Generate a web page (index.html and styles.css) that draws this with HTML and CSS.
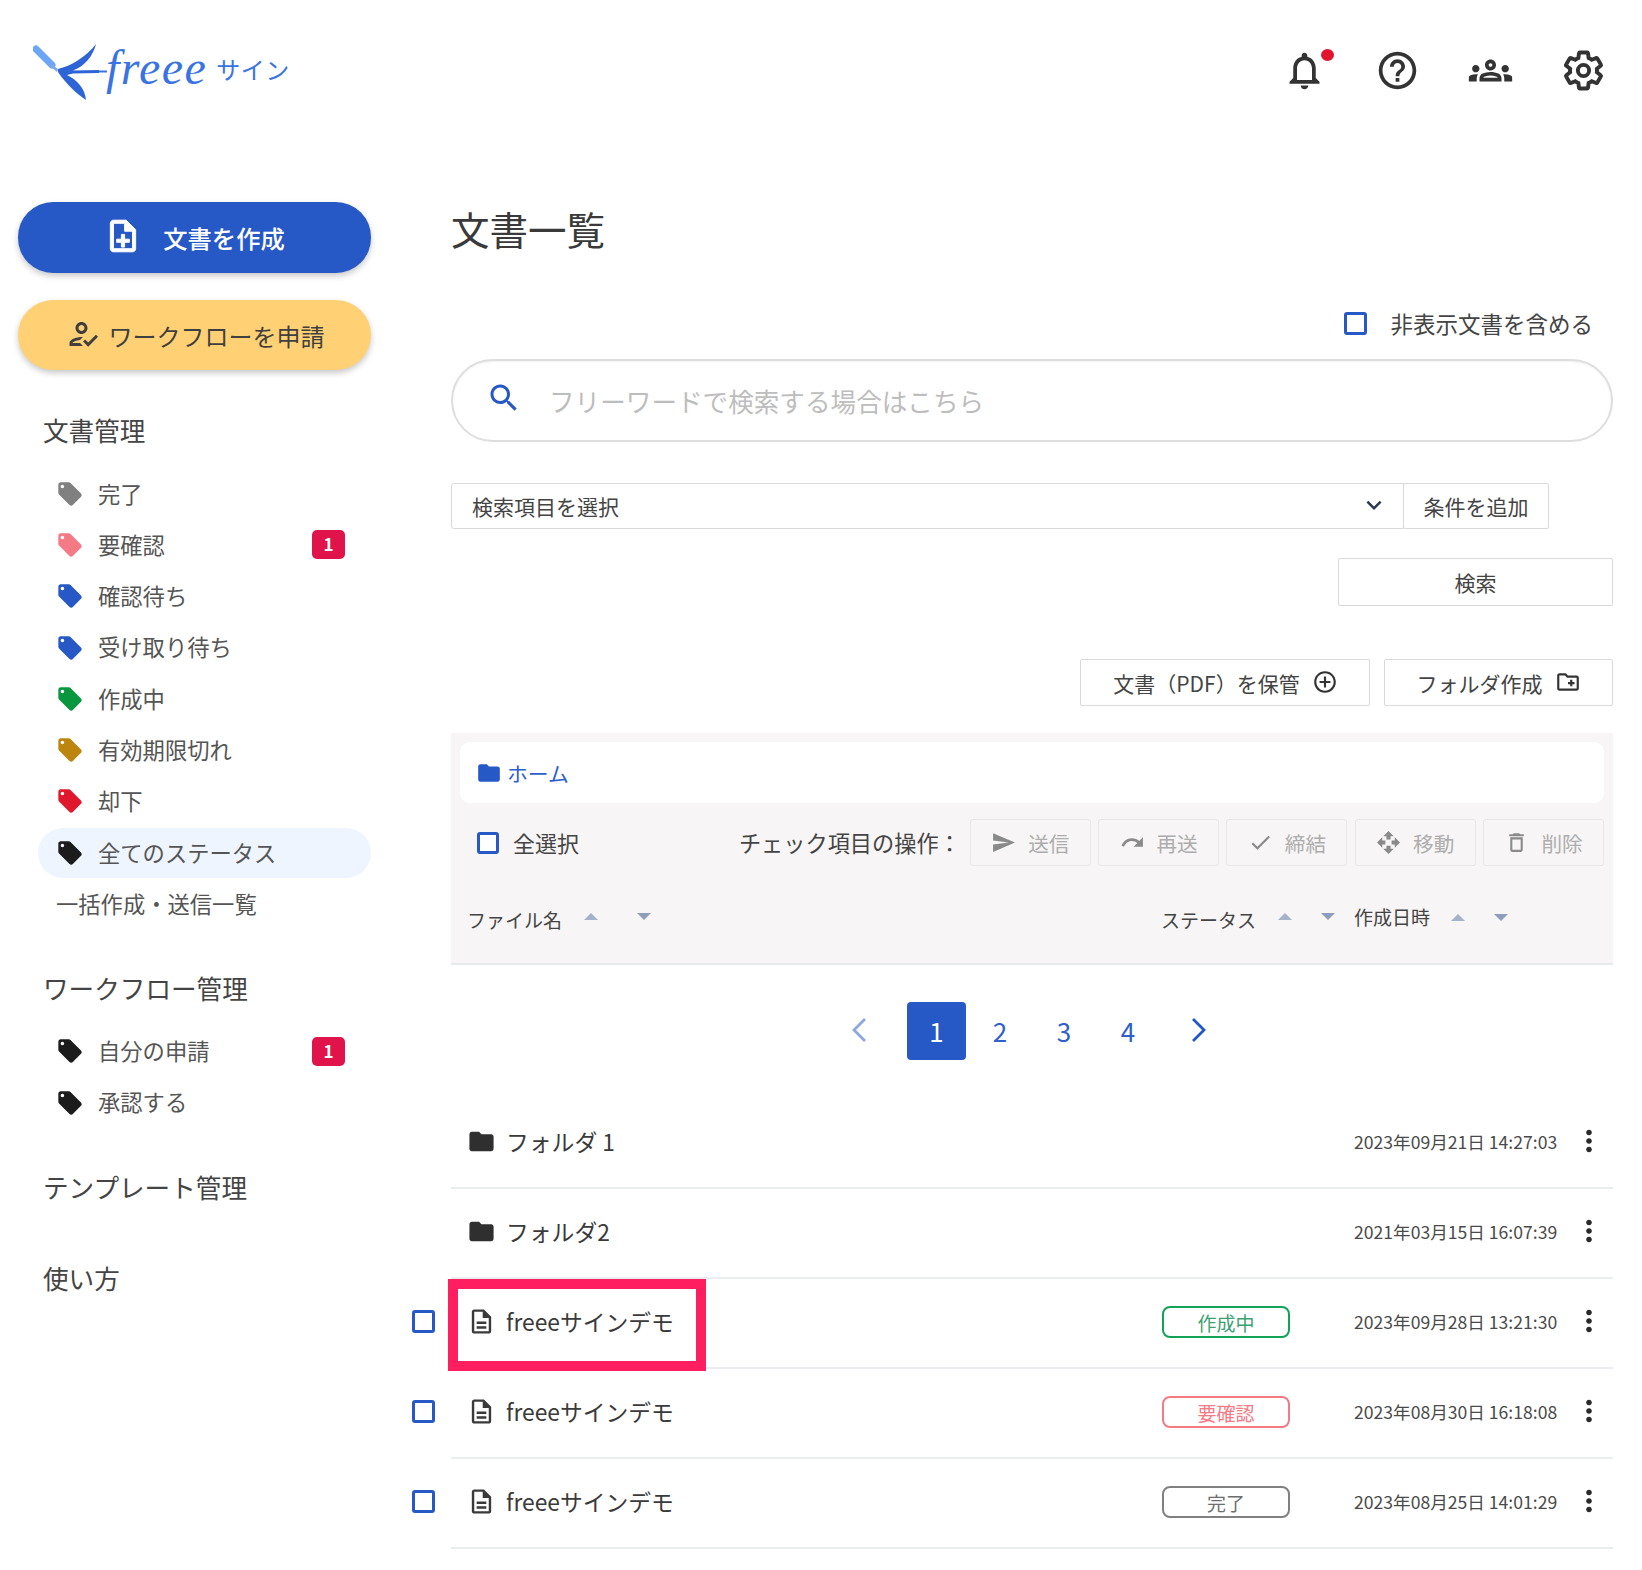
FILE: index.html
```html
<!DOCTYPE html>
<html lang="ja">
<head>
<meta charset="utf-8">
<title>freeeサイン 文書一覧</title>
<link rel="stylesheet" href="styles.css">
</head>
<body>
<svg class="sprite" aria-hidden="true">
  <symbol id="i-bell" viewBox="0 0 24 24"><path d="M12 22c1.100 0 2-.9 2-2h-4c0 1.100.9 2 2 2zm6-6v-5c0-3.070-1.630-5.640-4.500-6.320V4c0-.83-.67-1.500-1.500-1.500s-1.500.67-1.500 1.500v.68C7.640 5.360 6 7.920 6 11v5l-2 2v1h16v-1l-2-2zm-2 1H8v-6c0-2.480 1.510-4.500 4-4.500s4 2.020 4 4.500v6z"/></symbol>
  <symbol id="i-help" viewBox="0 0 24 24"><path d="M11 18h2v-2h-2v2zm1-16C6.480 2 2 6.480 2 12s4.480 10 10 10 10-4.480 10-10S17.520 2 12 2zm0 18c-4.410 0-8-3.590-8-8s3.590-8 8-8 8 3.590 8 8-3.590 8-8 8zm0-14c-2.210 0-4 1.790-4 4h2c0-1.100.9-2 2-2s2 .9 2 2c0 2-3 1.750-3 5h2c0-2.250 3-2.500 3-5 0-2.210-1.790-4-4-4z"/></symbol>
  <symbol id="i-groups" viewBox="0 0 24 24"><path d="M4,13c1.100,0,2-0.900,2-2c0-1.100-0.900-2-2-2s-2,0.900-2,2C2,12.100,2.900,13,4,13z M5.130,14.100C4.760,14.040,4.390,14,4,14 c-0.990,0-1.930,0.210-2.780,0.580C0.480,14.900,0,15.620,0,16.430V18l4.500,0v-1.610C4.500,15.560,4.730,14.780,5.130,14.100z M20,13c1.100,0,2-0.900,2-2 c0-1.100-0.900-2-2-2s-2,0.900-2,2C18,12.100,18.900,13,20,13z M24,16.430c0-0.810-0.480-1.530-1.220-1.850C21.930,14.210,20.990,14,20,14 c-0.390,0-0.760,0.040-1.130,0.100c0.400,0.680,0.630,1.460,0.630,2.290V18l4.500,0V16.430z M16.240,13.650c-1.170-0.520-2.610-0.900-4.240-0.900 c-1.630,0-3.070,0.390-4.240,0.900C6.680,14.130,6,15.210,6,16.390V18h12v-1.610C18,15.210,17.320,14.130,16.240,13.650z M8.070,16 c0.090-0.230,0.130-0.390,0.910-0.690c0.970-0.380,1.990-0.560,3.020-0.560s2.050,0.180,3.020,0.560c0.770,0.300,0.810,0.460,0.910,0.690H8.070z M12,8 c0.550,0,1,0.450,1,1s-0.450,1-1,1s-1-0.450-1-1S11.450,8,12,8 M12,6c-1.660,0-3,1.340-3,3c0,1.660,1.340,3,3,3s3-1.340,3-3 C15,7.340,13.660,6,12,6L12,6z"/></symbol>
  <symbol id="i-gear" viewBox="0 0 24 24"><path class="gear-line" d="M19.140 12.940c.04-.3.060-.61.060-.94 0-.32-.02-.64-.07-.94l2.030-1.580c.18-.14.23-.41.120-.61l-1.920-3.320c-.12-.22-.37-.29-.59-.22l-2.390.96c-.5-.38-1.030-.7-1.620-.94l-.36-2.540c-.04-.24-.24-.41-.48-.41h-3.840c-.24 0-.43.170-.47.410l-.36 2.540c-.59.240-1.130.570-1.620.940l-2.390-.96c-.22-.08-.47 0-.59.220L2.740 8.870c-.12.210-.08.470.120.610l2.030 1.580c-.05.300-.09.630-.09.940s.02.640.07.940l-2.030 1.580c-.18.140-.23.410-.12.610l1.920 3.320c.12.220.37.290.59.220l2.390-.96c.5.380 1.030.7 1.620.94l.36 2.540c.05.240.24.410.48.410h3.840c.24 0 .44-.17.47-.41l.36-2.540c.59-.24 1.130-.56 1.620-.94l2.390.96c.22.080.47 0 .59-.22l1.920-3.320c.12-.22.07-.47-.12-.61l-2.010-1.580z"/><circle class="gear-line" cx="12" cy="12" r="3"/></symbol>
  <symbol id="i-search" viewBox="0 0 24 24"><path d="M15.500 14h-.79l-.28-.27C15.410 12.590 16 11.110 16 9.500 16 5.910 13.090 3 9.500 3S3 5.910 3 9.500 5.910 16 9.500 16c1.610 0 3.090-.59 4.230-1.570l.27.28v.79l5 4.990L20.490 19l-4.990-5zm-6 0C7.010 14 5 11.990 5 9.500S7.010 5 9.500 5 14 7.010 14 9.500 11.990 14 9.500 14z"/></symbol>
  <symbol id="i-tag" viewBox="0 0 24 24"><path d="M21.410 11.580l-9-9C12.050 2.220 11.550 2 11 2H4c-1.100 0-2 .9-2 2v7c0 .55.22 1.050.59 1.420l9 9c.36.36.86.58 1.410.58.55 0 1.050-.22 1.410-.59l7-7c.37-.36.59-.86.59-1.410 0-.55-.23-1.060-.59-1.420zM5.500 7C4.670 7 4 6.330 4 5.500S4.670 4 5.500 4 7 4.670 7 5.500 6.330 7 5.500 7z"/></symbol>
  <symbol id="i-note-add" viewBox="0 0 24 24"><path d="M13 11h-2v3H8v2h3v3h2v-3h3v-2h-3zm1-9H6c-1.100 0-2 .9-2 2v16c0 1.100.89 2 1.990 2H18c1.100 0 2-.9 2-2V8l-6-6zm4 18H6V4h7v5h5v11z"/></symbol>
  <symbol id="i-reg" viewBox="0 0 24 24"><path d="M11 12c2.210 0 4-1.790 4-4s-1.790-4-4-4-4 1.790-4 4 1.790 4 4 4zm0-6c1.100 0 2 .9 2 2s-.9 2-2 2-2-.9-2-2 .9-2 2-2zM5 18c.2-.63 2.570-1.680 4.960-1.940l2.040-2c-.39-.04-.68-.06-1-.06-2.670 0-8 1.340-8 4v2h9l-2-2H5zm15.600-5.500l-5.130 5.170-2.070-2.080L12 17l3.470 3.500L22 13.910z"/></symbol>
  <symbol id="i-folder" viewBox="0 0 24 24"><path d="M10 4H4c-1.100 0-1.990.9-1.990 2L2 18c0 1.100.9 2 2 2h16c1.100 0 2-.9 2-2V8c0-1.100-.9-2-2-2h-8l-2-2z"/></symbol>
  <symbol id="i-doc" viewBox="0 0 24 24"><path d="M8 16h8v2H8zm0-4h8v2H8zm6-10H6c-1.100 0-2 .9-2 2v16c0 1.100.89 2 1.990 2H18c1.100 0 2-.9 2-2V8l-6-6zm4 18H6V4h7v5h5v11z"/></symbol>
  <symbol id="i-add-circle" viewBox="0 0 24 24"><path d="M13 7h-2v4H7v2h4v4h2v-4h4v-2h-4V7zm-1-5C6.480 2 2 6.480 2 12s4.480 10 10 10 10-4.480 10-10S17.520 2 12 2zm0 18c-4.410 0-8-3.590-8-8s3.590-8 8-8 8 3.590 8 8-3.590 8-8 8z"/></symbol>
  <symbol id="i-new-folder" viewBox="0 0 24 24"><path d="M20 6h-8l-2-2H4c-1.110 0-1.990.89-1.990 2L2 18c0 1.110.89 2 2 2h16c1.110 0 2-.89 2-2V8c0-1.110-.89-2-2-2zm0 12H4V6h5.170l2 2H20v10zm-8-4h2v2h2v-2h2v-2h-2v-2h-2v2h-2z"/></symbol>
  <symbol id="i-send" viewBox="0 0 24 24"><path d="M2.010 21L23 12 2.010 3 2 10l15 2-15 2z"/></symbol>
  <symbol id="i-redo" viewBox="0 0 24 24"><path d="M18.400 10.600C16.550 8.990 14.150 8 11.500 8c-4.650 0-8.580 3.030-9.960 7.220L3.900 16c1.050-3.190 4.050-5.500 7.600-5.500 1.950 0 3.730.72 5.120 1.880L13 16h9V7l-3.600 3.600z"/></symbol>
  <symbol id="i-check" viewBox="0 0 24 24"><path d="M9 16.170L4.830 12l-1.420 1.410L9 19 21 7l-1.410-1.410z"/></symbol>
  <symbol id="i-move" viewBox="0 0 24 24"><path d="M10 9h4V6h3l-5-5-5 5h3v3zm-1 1H6V7l-5 5 5 5v-3h3v-4zm14 2l-5-5v3h-3v4h3v3l5-5zm-9 3h-4v3H7l5 5 5-5h-3v-3z"/></symbol>
  <symbol id="i-delete" viewBox="0 0 24 24"><path d="M6 19c0 1.100.9 2 2 2h8c1.100 0 2-.9 2-2V7H6v12zM8 9h8v10H8V9zm7.500-5l-1-1h-5l-1 1H5v2h14V4z"/></symbol>
  <symbol id="i-more" viewBox="0 0 24 24"><path d="M12 8c1.100 0 2-.9 2-2s-.9-2-2-2-2 .9-2 2 .9 2 2 2zm0 2c-1.100 0-2 .9-2 2s.9 2 2 2 2-.9 2-2-.9-2-2-2zm0 6c-1.100 0-2 .9-2 2s.9 2 2 2 2-.9 2-2-.9-2-2-2z"/></symbol>
  <symbol id="i-expand" viewBox="0 0 24 24"><path d="M16.590 8.590L12 13.170 7.410 8.590 6 10l6 6 6-6z"/></symbol>
</svg>

<header class="topbar">
  <a class="logo">
    <svg class="logo-bird" viewBox="0 0 78 56" aria-hidden="true">
      <path class="bird-pen" d="M3 5L19 21"/>
      <path class="bird-nib" d="M18 20l7 5-1 3-7-6z"/>
      <path class="bird-wing" d="M25 25C38 22 53 13 63 0C60 12 52 22 40 26.500L66 26V29L40 29.500L34 31C44 36 52 44 53 56C44 50 33 40 25 28z"/>
      <path class="bird-tail" d="M66 27.500H74"/>
    </svg>
    <span class="logo-word">freee</span>
    <span class="logo-sub">サイン</span>
  </a>
  <nav class="top-icons">
    <span class="top-icon bell"><svg class="ic-top"><use href="#i-bell"/></svg><i class="bell-dot"></i></span>
    <span class="top-icon"><svg class="ic-top"><use href="#i-help"/></svg></span>
    <span class="top-icon"><svg class="ic-top groups"><use href="#i-groups"/></svg></span>
    <span class="top-icon"><svg class="ic-top"><use href="#i-gear"/></svg></span>
  </nav>
</header>

<div class="layout">
  <aside class="sidebar">
    <button class="cta cta-blue"><svg class="cta-icon-doc"><use href="#i-note-add"/></svg><span>文書を作成</span></button>
    <button class="cta cta-yellow"><svg class="cta-icon-reg"><use href="#i-reg"/></svg><span>ワークフローを申請</span></button>

    <section class="nav-group first">
      <h2 class="nav-title">文書管理</h2>
      <ul class="nav-list">
        <li class="nav-item"><svg class="tag t-gray"><use href="#i-tag"/></svg>完了</li>
        <li class="nav-item"><svg class="tag t-pink"><use href="#i-tag"/></svg>要確認<span class="count">1</span></li>
        <li class="nav-item"><svg class="tag t-blue"><use href="#i-tag"/></svg>確認待ち</li>
        <li class="nav-item"><svg class="tag t-blue"><use href="#i-tag"/></svg>受け取り待ち</li>
        <li class="nav-item"><svg class="tag t-green"><use href="#i-tag"/></svg>作成中</li>
        <li class="nav-item"><svg class="tag t-gold"><use href="#i-tag"/></svg>有効期限切れ</li>
        <li class="nav-item"><svg class="tag t-red"><use href="#i-tag"/></svg>却下</li>
        <li class="nav-item active"><svg class="tag t-black"><use href="#i-tag"/></svg>全てのステータス</li>
        <li class="nav-item plain">一括作成・送信一覧</li>
      </ul>
    </section>
    <section class="nav-group">
      <h2 class="nav-title tight">ワークフロー管理</h2>
      <ul class="nav-list">
        <li class="nav-item"><svg class="tag t-black"><use href="#i-tag"/></svg>自分の申請<span class="count">1</span></li>
        <li class="nav-item"><svg class="tag t-black"><use href="#i-tag"/></svg>承認する</li>
      </ul>
    </section>
    <section class="nav-group">
      <h2 class="nav-title loose">テンプレート管理</h2>
    </section>
    <section class="nav-group flush">
      <h2 class="nav-title">使い方</h2>
    </section>
  </aside>

  <main class="main">
    <h1 class="page-title">文書一覧</h1>

    <label class="hidden-toggle"><i class="check"></i><span>非表示文書を含める</span></label>

    <div class="search-box">
      <svg class="search-icon"><use href="#i-search"/></svg>
      <span class="search-ph">フリーワードで検索する場合はこちら</span>
    </div>

    <div class="filter-row">
      <div class="select"><span>検索項目を選択</span><svg class="select-arrow"><use href="#i-expand"/></svg></div>
      <button class="outline add-cond">条件を追加</button>
    </div>

    <div class="search-row"><button class="outline search-btn">検索</button></div>

    <div class="create-row">
      <button class="outline create-pdf">文書（PDF）を保管<svg class="btn-icon"><use href="#i-add-circle"/></svg></button>
      <button class="outline create-folder">フォルダ作成<svg class="btn-icon"><use href="#i-new-folder"/></svg></button>
    </div>

    <section class="table-head">
      <div class="crumb"><svg class="crumb-icon"><use href="#i-folder"/></svg><span>ホーム</span></div>
      <div class="toolbar">
        <i class="check"></i><span class="select-all">全選択</span>
        <span class="bulk-label">チェック項目の操作：</span>
        <button class="bulk"><svg><use href="#i-send"/></svg>送信</button>
        <button class="bulk"><svg><use href="#i-redo"/></svg>再送</button>
        <button class="bulk"><svg><use href="#i-check"/></svg>締結</button>
        <button class="bulk"><svg><use href="#i-move"/></svg>移動</button>
        <button class="bulk"><svg><use href="#i-delete"/></svg>削除</button>
      </div>
      <div class="columns">
        <div class="col col-name">ファイル名<i class="sort up"></i><i class="sort down"></i></div>
        <div class="col col-status">ステータス<i class="sort up"></i><i class="sort down"></i></div>
        <div class="col col-date">作成日時<i class="sort up"></i><i class="sort down"></i></div>
      </div>
    </section>

    <nav class="pager">
      <svg class="chev prev" viewBox="0 0 18 28"><path d="M15 3L4 14l11 11"/></svg>
      <span class="page current">1</span>
      <span class="page">2</span>
      <span class="page">3</span>
      <span class="page">4</span>
      <svg class="chev next" viewBox="0 0 18 28"><path d="M3 3l11 11L3 25"/></svg>
    </nav>

    <div class="rows">
      <div class="row">
        <span class="gutter"></span>
        <div class="row-body">
          <div class="name"><svg class="folder-icon"><use href="#i-folder"/></svg>フォルダ 1</div><div></div>
          <div class="date">2023年09月21日 14:27:03</div><svg class="more"><use href="#i-more"/></svg>
        </div>
      </div>
      <div class="row">
        <span class="gutter"></span>
        <div class="row-body">
          <div class="name"><svg class="folder-icon"><use href="#i-folder"/></svg>フォルダ2</div><div></div>
          <div class="date">2021年03月15日 16:07:39</div><svg class="more"><use href="#i-more"/></svg>
        </div>
      </div>
      <div class="row">
        <span class="gutter"><i class="check"></i></span>
        <div class="row-body">
          <div class="name"><svg class="doc-icon"><use href="#i-doc"/></svg>freeeサインデモ</div>
          <div><span class="status s-green">作成中</span></div>
          <div class="date">2023年09月28日 13:21:30</div><svg class="more"><use href="#i-more"/></svg>
        </div>
        <i class="callout"></i>
      </div>
      <div class="row">
        <span class="gutter"><i class="check"></i></span>
        <div class="row-body">
          <div class="name"><svg class="doc-icon"><use href="#i-doc"/></svg>freeeサインデモ</div>
          <div><span class="status s-pink">要確認</span></div>
          <div class="date">2023年08月30日 16:18:08</div><svg class="more"><use href="#i-more"/></svg>
        </div>
      </div>
      <div class="row">
        <span class="gutter"><i class="check"></i></span>
        <div class="row-body">
          <div class="name"><svg class="doc-icon"><use href="#i-doc"/></svg>freeeサインデモ</div>
          <div><span class="status s-gray">完了</span></div>
          <div class="date">2023年08月25日 14:01:29</div><svg class="more"><use href="#i-more"/></svg>
        </div>
      </div>
    </div>
  </main>
</div>
</body>
</html>
```

FILE: styles.css
```css
* { box-sizing: border-box; }
html, body { margin: 0; padding: 0; }
body {
  width: 1642px;
  height: 1570px;
  overflow: hidden;
  background: #fff;
  color: #3a3a3a;
  font-family: "Noto Sans CJK JP", "Noto Sans", sans-serif;
}
.sprite { display: none; }
svg { fill: currentColor; flex: none; }
button { font: inherit; color: inherit; background: none; cursor: default; }
ul { list-style: none; margin: 0; padding: 0; }
h1, h2 { margin: 0; font-weight: 400; }
i { display: block; }

/* header */
.topbar {
  height: 202px;
  padding: 44px 0 0 33px;
  display: flex;
  justify-content: space-between;
  align-items: flex-start;
}
.logo { display: flex; align-items: flex-start; color: #3a74e2; }
.logo-bird { width: 78px; height: 56px; }
.bird-pen { stroke: #6ea6f6; stroke-width: 7; stroke-linecap: round; fill: none; }
.bird-nib { fill: #7fa8e8; }
.bird-wing { fill: #2d64d6; }
.bird-tail { stroke: #3a74e2; stroke-width: 2; fill: none; }
.logo-word {
  font-family: "Liberation Serif", serif;
  font-style: italic;
  font-size: 48px;
  line-height: 48px;
  margin: 0 0 0 -5px;
  letter-spacing: 1.400px;
}
.logo-sub { font-size: 24px; line-height: 36px; margin: 7px 0 0 9px; letter-spacing: .5px; }
.top-icons {
  display: flex;
  padding: 4px 36px 0 0;
  gap: 48px;
  align-items: center;
}
.top-icon { position: relative; display: block; width: 45px; height: 45px; color: #333; }
.ic-top { width: 45px; height: 45px; display: block; }
.groups { transform: scale(.98); }
.gear-line { fill: none; stroke: currentColor; stroke-width: 2.100; }
.bell-dot {
  position: absolute;
  top: 1px;
  right: -7px;
  width: 13px;
  height: 12px;
  border-radius: 50%;
  background: #e0152d;
}

/* layout */
.layout { display: flex; align-items: flex-start; }
.sidebar { width: 451px; padding-left: 18px; flex: none; }
.main { width: 1162px; flex: none; }

/* sidebar */
.cta {
  width: 353px;
  height: 70px;
  display: flex;
  align-items: center;
  justify-content: center;
  border: 0;
  border-radius: 35px;
  font-size: 24px;
  box-shadow: 0 3px 6px rgba(0, 0, 0, .22);
}
.cta-blue { background: #2759c6; color: #fff; font-weight: 500; height: 71px; padding-left: 6px; font-size: 24.300px; }
.cta-blue svg { width: 38px; height: 38px; margin-right: 21px; margin-top: -4px; stroke: currentColor; stroke-width: .6; }
.cta-yellow { background: #ffd174; color: #3f3f3f; margin-top: 27px; padding-top: 2px; }
.cta-yellow svg { width: 36px; height: 36px; margin-right: 8px; margin-top: -4px; }

.nav-group { margin-top: 39px; }
.nav-group.first { margin-top: 40px; }
.nav-group.flush { margin-top: 51px; }
.nav-title { font-size: 25.600px; line-height: 40px; color: #444; padding-left: 25px; margin-bottom: 18px; }
.nav-title.tight { margin-bottom: 18px; margin-top: -1px; }
.nav-title.loose { margin-bottom: 0; }
.nav-item {
  display: flex;
  align-items: center;
  height: 51.300px;
  padding: 0 0 2px 18px;
  margin: 0 80px 0 20px;
  font-size: 22.300px;
  line-height: 1;
  color: #555;
  position: relative;
  z-index: 0;
}
.nav-item.active::before {
  content: "";
  position: absolute;
  z-index: -1;
  left: 0;
  right: 0;
  top: .600px;
  height: 50px;
  border-radius: 25px;
  background: #eef5ff;
}
.tag { width: 28px; height: 28px; margin: 2px 14px 0 0; }
.t-gray { color: #808080; }
.t-pink { color: #f47a86; }
.t-blue { color: #2759c6; }
.t-green { color: #08963f; }
.t-gold { color: #bc860e; }
.t-red { color: #e0182d; }
.t-black { color: #1c1c1c; }
.count {
  position: absolute;
  left: 274px;
  top: 11px;
  width: 33px;
  height: 29px;
  border-radius: 5px;
  background: #e0134a;
  color: #fff;
  font-size: 17px;
  font-weight: 700;
  line-height: 28px;
  text-align: center;
}

/* main head */
.page-title { font-size: 38.500px; line-height: 52px; color: #3a3a3a; }
.check {
  width: 23px;
  height: 23px;
  border: 3px solid #2759c6;
  border-radius: 3px;
  background: #fff;
  flex: none;
}
.hidden-toggle {
  display: flex;
  align-items: center;
  justify-content: flex-end;
  height: 24px;
  margin-top: 57px;
  padding-right: 20px;
  font-size: 22.500px;
  color: #444;
}
.hidden-toggle .check { margin-right: 23px; }
.search-box {
  display: flex;
  align-items: center;
  height: 83px;
  margin-top: 24px;
  padding: 0 0 0 33px;
  border: 2px solid #dedede;
  border-radius: 42px;
  box-shadow: inset 0 1px 2px rgba(0, 0, 0, .06);
}
.search-icon { width: 36px; height: 36px; color: #2759c6; margin-top: -6px; }
.search-ph { margin-left: 27px; font-size: 25.600px; color: #bdbdbd; }

.filter-row { display: flex; margin-top: 41px; height: 46px; }
.select {
  width: 953px;
  display: flex;
  align-items: center;
  justify-content: space-between;
  border: 1.500px solid #d9d9d9;
  border-radius: 3px 0 0 3px;
  padding: 0 14px 0 20px;
  font-size: 21px;
  color: #444;
}
.select-arrow { width: 30px; height: 30px; color: #2a3a55; margin-top: -3px; }
.outline {
  border: 1.500px solid #d9d9d9;
  border-radius: 2px;
  background: #fff;
  font-size: 21px;
  color: #444;
  display: flex;
  align-items: center;
  justify-content: center;
}
.add-cond { width: 146px; margin-left: -1px; }
.search-row { display: flex; justify-content: flex-end; margin-top: 29px; }
.search-btn { width: 275px; height: 48px; }
.create-row { display: flex; justify-content: flex-end; gap: 14px; margin-top: 53px; }
.create-pdf { width: 290px; height: 47px; padding-right: 5px; }
.create-folder { width: 229px; height: 47px; }
.btn-icon { width: 26px; height: 26px; margin-left: 12px; margin-top: -2px; color: #333; }

/* table head */
.table-head {
  margin-top: 27px;
  height: 232px;
  padding: 9px 9px 0;
  background: #f7f5f5;
  border-bottom: 2px solid #e9eaee;
}
.crumb {
  height: 61px;
  border-radius: 10px;
  background: #fff;
  display: flex;
  align-items: center;
  padding-left: 16px;
  color: #2c5fcb;
  font-size: 20.800px;
}
.crumb-icon { width: 26px; height: 26px; margin-right: 5px; color: #2759c6; }
.toolbar { display: flex; align-items: center; margin-top: 16px; height: 47px; padding-left: 17px; }
.toolbar .check { width: 22px; height: 22px; }
.select-all { margin-left: 14px; font-size: 22px; color: #444; line-height: 1; margin-top: -2px; }
.bulk-label { margin-left: auto; margin-right: 9px; font-size: 22.200px; color: #444; line-height: 1; margin-top: -1px; }
.bulk {
  width: 121px;
  height: 47px;
  margin-left: 7.300px;
  display: flex;
  align-items: center;
  justify-content: center;
  border: 1.500px solid #e8e8e8;
  border-radius: 3px;
  background: #f7f5f5;
  font-size: 20.600px;
  color: #adadad;
}
.bulk:first-of-type { margin-left: 0; }
.bulk svg { width: 25px; height: 25px; margin-right: 12px; color: #8a8a8a; }
.columns { display: grid; grid-template-columns: 702px 192px 1fr; margin: 34px 0 0 -9px; padding-left: 9px; height: 38px; }
.col { display: flex; align-items: center; font-size: 19px; color: #444; }
.col-name { margin-left: -2px; padding-left: 9px; }
.col-status { margin-left: -1px; }
.col-date { margin-top: -5px; }
.sort { width: 0; height: 0; border-left: 7px solid transparent; border-right: 7px solid transparent; margin-top: -6px; }
.sort.up { border-bottom: 7px solid #a5b3ca; margin-left: 22px; }
.sort.down { border-top: 7px solid #8e9dbb; margin-left: 39px; }
.col-status .sort.down { margin-left: 29px; }
.col-status .sort.up { margin-left: 22px; }
.col-date .sort.up { margin-left: 21px; margin-top: 2px; }
.col-date .sort.down { margin-left: 29px; margin-top: 2px; }

/* pager */
.pager { display: flex; align-items: center; height: 58px; margin-top: 37px; padding-left: 399px; color: #2f60cb; font-size: 26px; }
.chev { width: 18px; height: 28px; fill: none; stroke: currentColor; stroke-width: 2.800; }
.chev.prev { opacity: .55; margin-right: 39px; margin-top: -2px; }
.chev.next { margin-left: 30px; margin-top: -2px; color: #1f58c9; }
.page { width: 64px; text-align: center; margin-top: -2px; }
.page.current { width: 59px; height: 58px; line-height: 58px; margin-top: 0; border-radius: 4px; background: #2759c6; color: #fff; margin-right: 2px; }

/* rows */
.rows { margin-top: 39px; margin-left: -39px; }
.row { display: flex; height: 90px; position: relative; }
.gutter { width: 39px; flex: none; display: flex; align-items: center; padding-bottom: 6px; }
.row-body {
  flex: 1;
  display: grid;
  grid-template-columns: 711px 192px 1fr 48px;
  align-items: center;
  border-bottom: 2px solid #ebedf1;
}
.name { display: flex; align-items: center; font-size: 22.800px; color: #3a3a3a; padding-left: 16px; margin-top: -3px; }
.folder-icon { width: 29px; height: 29px; margin-right: 10px; color: #2f2f2f; }
.doc-icon { width: 29px; height: 29px; margin-right: 10px; color: #3a3a3a; }
.date { font-size: 17.600px; color: #4a4a4a; white-space: nowrap; margin-top: -3px; }
.more { width: 34px; height: 34px; color: #2a2a2a; justify-self: center; margin-top: -4px; }
.status {
  display: block;
  width: 128px;
  height: 32px;
  border: 2px solid;
  border-radius: 8px;
  text-align: center;
  font-size: 19px;
  line-height: 29px;
  margin-top: -3px;
}
.s-green { border-color: #12a356; color: #3d9f72; }
.s-pink { border-color: #f47a86; color: #f47a86; }
.s-gray { border-color: #808080; color: #6e6e6e; }
.callout {
  position: absolute;
  left: 36px;
  top: 0;
  width: 258px;
  height: 92px;
  border: 10px solid #ff1f60;
  pointer-events: none;
}
```
